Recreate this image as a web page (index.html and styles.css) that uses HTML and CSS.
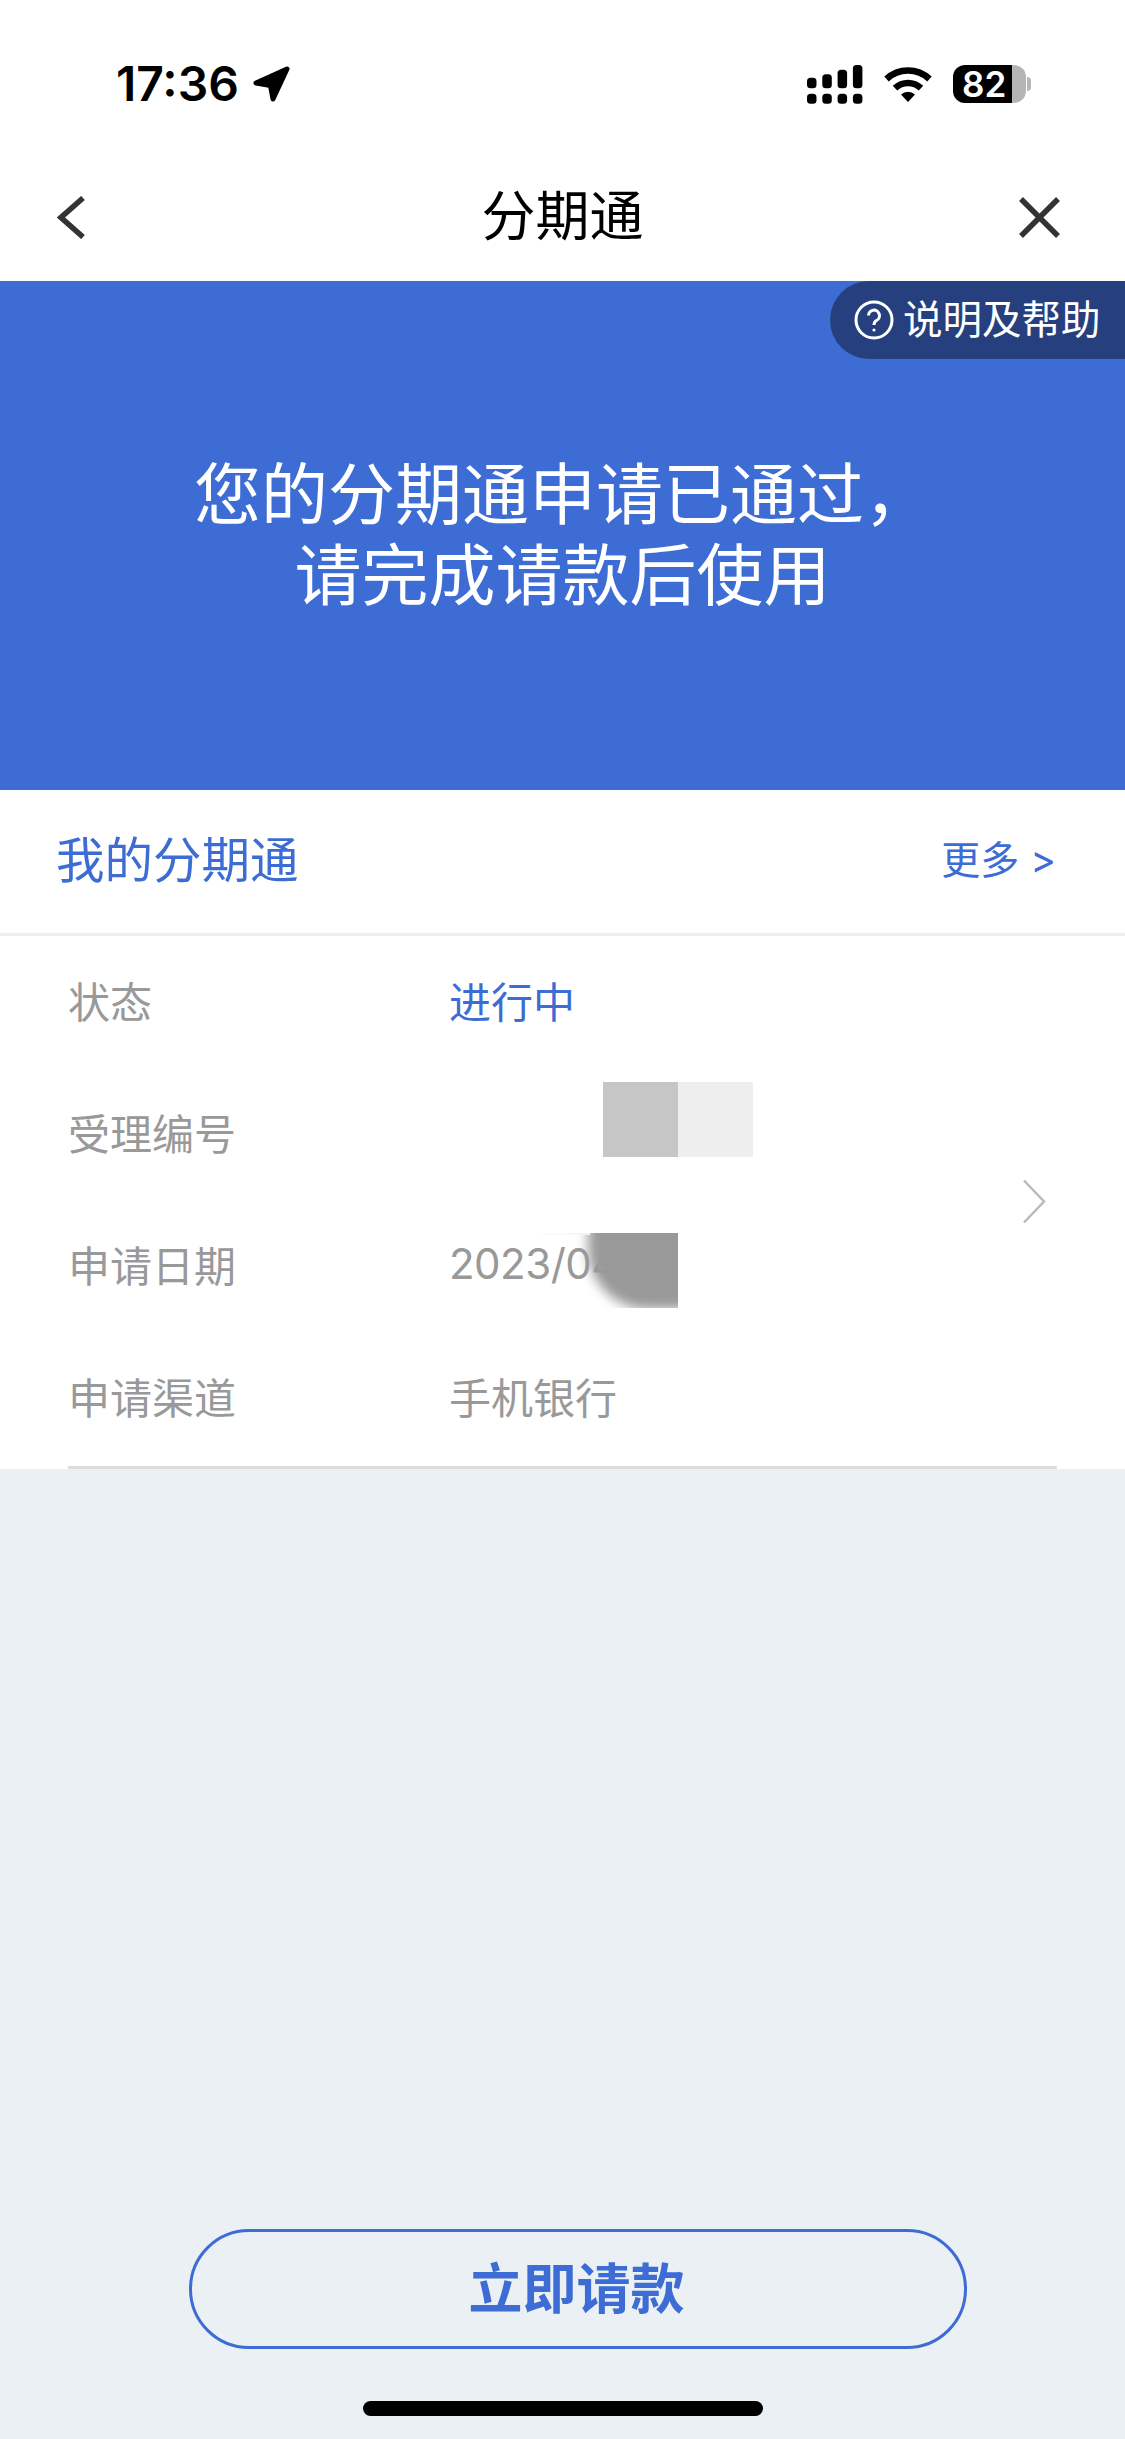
FILE: index.html
```html
<!DOCTYPE html>
<html lang="zh-CN">
<head>
    <meta charset="UTF-8">
    <meta name="viewport" content="width=device-width, initial-scale=1.0">
    <title>分期通</title>
    <link rel="stylesheet" href="styles.css">
</head>
<body>
    <div class="status-bar">
        <div class="status-left">
            <span class="time">17:36</span>
            <svg class="arrow-icon" width="37" height="36" viewBox="0 0 37 36">
                <path d="M34 3 3 17 17.5 19.5 20 33Z" fill="#000" stroke="#000" stroke-width="5" stroke-linejoin="round"/>
            </svg>
        </div>
        <div class="status-right">
            <svg width="56" height="39" viewBox="0 0 56 39" fill="#000">
                <rect x="0" y="12.7" width="9.5" height="10.6" rx="3.5"/>
                <rect x="15.3" y="9.3" width="9.5" height="14" rx="3.5"/>
                <rect x="30.6" y="4.7" width="9.5" height="18.6" rx="3.5"/>
                <rect x="45.9" y="0" width="9.5" height="23.3" rx="3.5"/>
                <rect x="0" y="28.7" width="9.5" height="10" rx="3.5"/>
                <rect x="15.3" y="28.7" width="9.5" height="10" rx="3.5"/>
                <rect x="30.6" y="28.7" width="9.5" height="10" rx="3.5"/>
                <rect x="45.9" y="28.7" width="9.5" height="10" rx="3.5"/>
            </svg>
            <svg width="48" height="35" viewBox="0 0 48 35" fill="none" stroke="#000" stroke-width="6.5">
                <path d="M2.5 12A31.5 31.5 0 0 1 45.5 12"/>
                <path d="M11 21.1A19 19 0 0 1 37 21.1"/>
                <path d="M24 35 17 27.5A10.3 10.3 0 0 1 31 27.5Z" fill="#000" stroke="none"/>
            </svg>
            <div class="battery">
                <div class="battery-body"><span class="battery-level">82</span></div>
                <div class="battery-nub"></div>
            </div>
        </div>
    </div>

    <div class="nav">
        <svg class="nav-back" width="28" height="43" viewBox="0 0 28 43" fill="none" stroke="#333" stroke-width="5.5">
            <path d="M26 2 4 21.5 26 41"/>
        </svg>
        <div class="nav-title">分期通</div>
        <svg class="nav-close" width="41" height="41" viewBox="0 0 41 41" fill="none" stroke="#333" stroke-width="5.5">
            <path d="M2 2 39 39M39 2 2 39"/>
        </svg>
    </div>

    <div class="hero">
        <div class="help-tab">
            <svg width="40" height="40" viewBox="0 0 40 40" fill="none" stroke="#fff" stroke-width="3">
                <circle cx="20" cy="20" r="18"/>
                <path d="M14.5 15.5A5.5 5.5 0 1 1 22.5 20.5C20.5 21.6 20 22.6 20 25"/>
                <circle cx="20" cy="30" r="1.6" fill="#fff" stroke="none"/>
            </svg>
            <span class="help-text">说明及帮助</span>
        </div>
        <p class="hero-text">您的分期通申请已通过，<br>请完成请款后使用</p>
    </div>

    <div class="section-head">
        <span class="section-title">我的分期通</span>
        <span class="section-more">更多 &gt;</span>
    </div>

    <div class="detail">
        <div class="detail-rows">
            <div class="row">
                <span class="row-label">状态</span>
                <span class="row-value active">进行中</span>
            </div>
            <div class="row">
                <span class="row-label">受理编号</span>
                <span class="row-value"></span>
                <div class="redact-light"></div>
            </div>
            <div class="row">
                <span class="row-label">申请日期</span>
                <div class="redact-dark"></div>
                <span class="row-value date">2023/04/</span>
            </div>
            <div class="row">
                <span class="row-label">申请渠道</span>
                <span class="row-value">手机银行</span>
            </div>
        </div>
        <svg class="detail-arrow" width="24" height="45" viewBox="0 0 24 45" fill="none" stroke="#bbb" stroke-width="2.5">
            <path d="M2 1.5 22 22.5 2 43.5"/>
        </svg>
    </div>

    <div class="bottom">
        <button class="apply-btn">立即请款</button>
        <div class="home-bar"></div>
    </div>
</body>
</html>
```

FILE: styles.css
```css
* {
    box-sizing: border-box;
}

html, body {
    margin: 0;
    padding: 0;
}

body {
    width: 1125px;
    height: 2439px;
    display: flex;
    flex-direction: column;
    background-color: #fff;
    font-family: Inter, "Noto Sans CJK SC", sans-serif;
    overflow: hidden;
}

/* status bar */
.status-bar {
    height: 153px;
    padding: 15px 94px 0 116px;
    display: flex;
    justify-content: space-between;
    align-items: center;
    flex-shrink: 0;
}

.status-left {
    display: flex;
    align-items: center;
    gap: 14px;
}

.time {
    font-size: 48px;
    font-weight: 600;
    line-height: 40px;
    color: #000;
}

.status-right {
    display: flex;
    align-items: center;
    gap: 21px;
}

.battery {
    display: flex;
    align-items: center;
    gap: 1px;
}

.battery-body {
    width: 73px;
    height: 38px;
    border-radius: 12px;
    background: linear-gradient(90deg, #000 59px, #b5b5b5 59px);
}

.battery-level {
    display: block;
    width: 59px;
    padding-left: 9px;
    font-size: 35px;
    font-weight: 600;
    line-height: 38px;
    color: #fff;
}

.battery-nub {
    width: 4px;
    height: 14px;
    border-radius: 0 4px 4px 0;
    background-color: #b5b5b5;
}

/* nav */
.nav {
    height: 128px;
    padding: 0 57px;
    display: grid;
    grid-template-columns: 1fr auto 1fr;
    align-items: center;
    flex-shrink: 0;
}

.nav-title {
    font-size: 54px;
    line-height: 64px;
    color: #000;
}

.nav-close {
    justify-self: end;
    margin-right: 8px;
}

/* blue banner */
.hero {
    position: relative;
    height: 509px;
    display: flex;
    align-items: center;
    justify-content: center;
    background-color: #3c6cd4;
    flex-shrink: 0;
}

.hero-text {
    margin: 0 0 1px;
    font-size: 67px;
    line-height: 81px;
    text-align: center;
    color: #fff;
}

.help-tab {
    position: absolute;
    top: 0;
    right: 0;
    width: 295px;
    height: 78px;
    padding-left: 24px;
    display: flex;
    align-items: center;
    gap: 9px;
    border-radius: 40px 0 0 40px;
    background-color: #26407f;
    font-size: 39.5px;
    color: #fff;
}

.help-text {
    padding-bottom: 8px;
}

/* my instalment */
.section-head {
    height: 146px;
    padding: 0 69px 10px 56px;
    display: flex;
    justify-content: space-between;
    align-items: center;
    border-bottom: 3px solid #eee;
    flex-shrink: 0;
}

.section-title {
    font-size: 48.5px;
    color: #3c6cd4;
}

.section-more {
    font-size: 39px;
    color: #3c6cd4;
}

.detail {
    margin: 0 68px;
    padding-bottom: 2px;
    display: flex;
    align-items: center;
    border-bottom: 3px solid #ddd;
    flex-shrink: 0;
}

.detail-rows {
    flex: 1;
}

.detail-arrow {
    margin: 3px 11px 0 0;
}

.row {
    position: relative;
    height: 132px;
    padding-bottom: 5px;
    display: flex;
    align-items: center;
    font-size: 42px;
}

.row-label {
    width: 381px;
    color: #999;
}

.row-value {
    position: relative;
    color: #999;
}

.row-value.active {
    color: #3c6cd4;
}

.row-value.date {
    letter-spacing: -0.5px;
}

.redact-light {
    position: absolute;
    left: 535px;
    top: 14px;
    width: 150px;
    height: 75px;
    background: linear-gradient(90deg, #c6c6c6 50%, #eee 50%);
}

.redact-dark {
    position: absolute;
    left: 462px;
    top: 33px;
    width: 148px;
    height: 75px;
    overflow: hidden;
}

.redact-dark::before {
    content: "";
    position: absolute;
    top: -20px;
    right: -20px;
    bottom: -1px;
    left: 58px;
    border-radius: 0 0 0 60px;
    background-color: #999;
    filter: blur(6px);
}

.redact-dark::after {
    content: "";
    position: absolute;
    top: 0;
    left: 0;
    width: 60px;
    height: 2px;
    background: linear-gradient(90deg, transparent, #f4f4f4);
}

/* bottom button */
.bottom {
    flex: 1;
    display: flex;
    flex-direction: column;
    justify-content: flex-end;
    background-color: #ebf0f5;
}

.apply-btn {
    width: 778px;
    height: 120px;
    margin: 0 0 52px 189px;
    padding: 0 3px 8px 0;
    border: 3px solid #3c6cd4;
    border-radius: 60px;
    background: none;
    font-family: inherit;
    font-size: 54px;
    font-weight: 700;
    color: #3c6cd4;
}

.home-bar {
    width: 400px;
    height: 15px;
    margin: 0 0 23px 363px;
    border-radius: 8px;
    background-color: #000;
}
```
